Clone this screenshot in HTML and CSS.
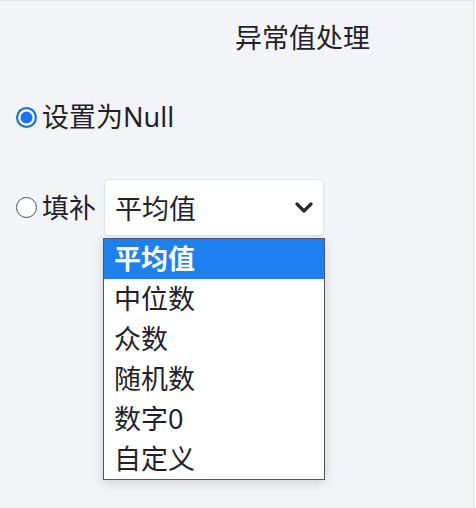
FILE: index.html
```html
<!DOCTYPE html>
<html>
<head>
    <title>异常值处理</title>
    <link rel="stylesheet" href="styles.css">
</head>
<body>
    <div class="panel">
        <h1 class="title">异常值处理</h1>

        <div class="option">
            <span class="radio checked"></span>
            <span class="label">设置为Null</span>
        </div>

        <div class="option fill-row">
            <span class="radio"></span>
            <span class="label">填补</span>
            <div class="select-wrap">
                <div class="select">
                    <span class="select-value">平均值</span>
                    <svg class="chevron" width="18" height="12" viewBox="0 0 18 12">
                        <path d="M2 2 L9 9 L16 2" fill="none" stroke="#2b2b33" stroke-width="3.2" stroke-linecap="round" stroke-linejoin="round"/>
                    </svg>
                </div>
                <ul class="dropdown">
                    <li class="active">平均值</li>
                    <li>中位数</li>
                    <li>众数</li>
                    <li>随机数</li>
                    <li>数字0</li>
                    <li>自定义</li>
                </ul>
            </div>
        </div>
    </div>
</body>
</html>
```

FILE: styles.css
```css
body {
    margin: 0;
    background-color: #f3f4f8;
    font-family: "Noto Sans", "Noto Sans CJK SC", sans-serif;
    color: #241f2b;
}

.panel {
    height: 508px;
    box-sizing: border-box;
    border-top: 1px solid #e6e7ec;
    border-right: 1px solid #e6e7ec;
    width: 474px;
}

.title {
    margin: 0;
    height: 74px;
    line-height: 74px;
    padding-left: 235px;
    font-size: 27px;
    font-weight: normal;
}

.option {
    display: flex;
    align-items: center;
    height: 40px;
    margin-top: 22px;
    padding-left: 16px;
}

.fill-row {
    height: 57px;
    margin-top: 42px;
}

.radio {
    width: 21px;
    height: 21px;
    box-sizing: border-box;
    border-radius: 50%;
    border: 1.6px solid #4d4a55;
    background-color: #fff;
    margin-right: 5px;
}

.radio.checked {
    border: 2.5px solid #1a6fe0;
    background-color: #1a73f0;
    box-shadow: inset 0 0 0 2.5px #fff;
}

.label {
    font-size: 27px;
    line-height: 40px;
}

.select-wrap {
    position: relative;
    margin-left: 8px;
}

.select {
    width: 220px;
    height: 57px;
    box-sizing: border-box;
    display: flex;
    align-items: center;
    justify-content: space-between;
    padding: 0 8px 0 10px;
    background-color: #fff;
    border: 1px solid #e3e4e8;
    border-radius: 5px;
    box-shadow: 0 1px 2px rgba(0, 0, 0, 0.05);
}

.select-value {
    font-size: 27px;
}

.chevron {
    margin-right: 2px;
}

.dropdown {
    position: absolute;
    top: 59px;
    left: -1px;
    width: 222px;
    box-sizing: border-box;
    margin: 0;
    padding: 0;
    list-style: none;
    background-color: #fff;
    border: 1px solid #56535c;
    box-shadow: 0 3px 10px rgba(0, 0, 0, 0.15);
}

.dropdown li {
    height: 40px;
    line-height: 40px;
    padding-left: 10px;
    font-size: 27px;
}

.dropdown li.active {
    background-color: #1e80f0;
    color: #fff;
    font-weight: 600;
}
```
